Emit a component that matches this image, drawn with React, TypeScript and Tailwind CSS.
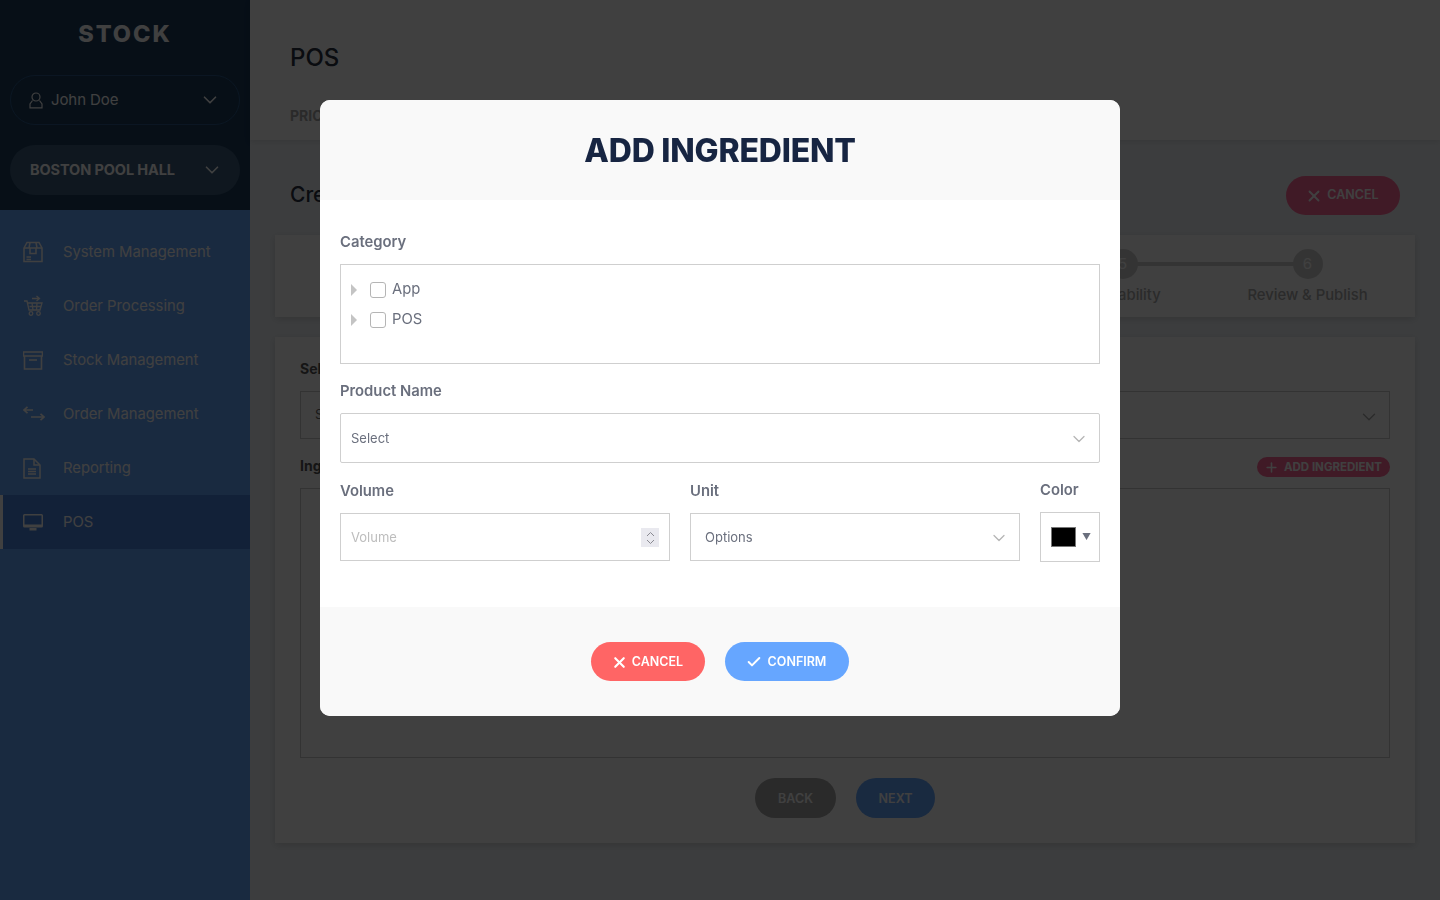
import React from "react";
import { Check, ChevronDown, Plus, X } from "lucide-react";

const font = { fontFamily: "Inter, 'Liberation Sans', sans-serif" };

function BoxIcon() {
  return (
    <svg width="20" height="22" viewBox="0 0 20 22" fill="none" stroke="currentColor" strokeWidth="1.5">
      <path d="M1 7 L4 1.5 H16 L19 7 V20.5 H1 Z" />
      <path d="M1 7 H19 M7 7 V12.5 H13 V7 M7 1.5 L6 7 M13 1.5 L14 7" />
      <path d="M3.5 16 H8 M3.5 18.5 H8" />
    </svg>
  );
}
function CartIcon() {
  return (
    <svg width="22" height="22" viewBox="0 0 22 22" fill="none" stroke="currentColor" strokeWidth="1.3">
      <path d="M1 6 H4 L6 15 H17 L19 8 H5" />
      <path d="M6.5 11.5 H18 M9 8 L10 15 M14 8 L13.5 15" />
      <circle cx="8" cy="18.5" r="1.8" />
      <circle cx="15.5" cy="18.5" r="1.8" />
      <path d="M9 3.5 H16 M13.5 1 L16.5 3.5 L13.5 6" />
    </svg>
  );
}
function ArchiveIcon() {
  return (
    <svg width="20" height="19" viewBox="0 0 20 19" fill="none" stroke="currentColor" strokeWidth="1.6">
      <path d="M0.5 1 H19.5 V5 H0.5 Z" />
      <path d="M1.5 5 V18 H18.5 V5" />
      <path d="M6 9 H14" />
    </svg>
  );
}
function SwapIcon() {
  return (
    <svg width="22" height="16" viewBox="0 0 22 16" fill="none" stroke="currentColor" strokeWidth="1.6">
      <path d="M1 4 H10 M4.5 0.8 L1 4 L4.5 7.2" />
      <path d="M8 11 H21 M17.5 7.8 L21 11 L17.5 14.2" />
    </svg>
  );
}
function FileIcon() {
  return (
    <svg width="18" height="21" viewBox="0 0 18 21" fill="none" stroke="currentColor" strokeWidth="1.5">
      <path d="M1 1 H11 L17 7 V20 H1 Z" />
      <path d="M11 1 V7 H17" />
      <path d="M5 11 H13 M5 13.5 H13 M5 16 H13" />
    </svg>
  );
}
function MonitorIcon() {
  return (
    <svg width="20" height="17" viewBox="0 0 20 17" fill="currentColor">
      <path d="M1.5 0 H18.5 A1.5 1.5 0 0 1 20 1.5 V12 A1.5 1.5 0 0 1 18.5 13.5 H1.5 A1.5 1.5 0 0 1 0 12 V1.5 A1.5 1.5 0 0 1 1.5 0 Z M1.5 1.5 V10.5 H18.5 V1.5 Z" fillRule="evenodd" />
      <path d="M6.5 14 H13.5 V16.5 H6.5 Z" />
    </svg>
  );
}
function UserIcon() {
  return (
    <svg width="14" height="17" viewBox="0 0 14 17" fill="none" stroke="currentColor" strokeWidth="1.2">
      <circle cx="7" cy="5" r="4" />
      <path d="M3.5 8.5 L1 12 V15.8 H13 V12 L10.5 8.5" />
    </svg>
  );
}

const menu = [
  { label: "System Management", icon: <BoxIcon /> },
  { label: "Order Processing", icon: <CartIcon /> },
  { label: "Stock Management", icon: <ArchiveIcon /> },
  { label: "Order Management", icon: <SwapIcon /> },
  { label: "Reporting", icon: <FileIcon /> },
  { label: "POS", icon: <MonitorIcon />, active: true },
];

const steps = [
  { n: 1, label: "" },
  { n: 2, label: "" },
  { n: 3, label: "" },
  { n: 4, label: "" },
  { n: 5, label: "Availability" },
  { n: 6, label: "Review & Publish" },
];

function Sidebar() {
  return (
    <aside className="w-[250px] shrink-0 h-full bg-[#66a6ff] flex flex-col">
      <div className="h-[210px] bg-[#1c3c5c] flex flex-col items-center px-[10px] text-white">
        <div className="h-[75px] pb-[8px] flex items-center text-[23.5px] font-extrabold tracking-[2px] text-white">STOCK</div>
        <div className="w-full h-[50px] rounded-full border border-[#2c5a8c] flex items-center pl-[18px] pr-[18px]">
          <UserIcon />
          <span className="ml-[8px] text-[15px] tracking-[-0.1px]">John Doe</span>
          <ChevronDown className="ml-auto" size={22} strokeWidth={1.8} />
        </div>
        <div className="w-full h-[50px] mt-[20px] rounded-full bg-[#3c5c7c] flex items-center pl-[20px] pr-[17px]">
          <span className="text-[14.5px] leading-[18px] font-bold tracking-[-0.1px]">BOSTON POOL HALL</span>
          <ChevronDown className="ml-auto" size={22} strokeWidth={1.8} />
        </div>
      </div>
      <nav className="pt-[15px] flex flex-col">
        {menu.map((m) => (
          <div
            key={m.label}
            className={`h-[54px] flex items-center text-white border-l-[3px] ${m.active ? "bg-[#4884e0] border-l-white" : "border-l-transparent"}`}
          >
            <span className="w-[60px] pl-[20px] shrink-0 flex justify-start">{m.icon}</span>
            <span className="text-[14.8px] font-normal">{m.label}</span>
          </div>
        ))}
      </nav>
    </aside>
  );
}

function Background() {
  return (
    <main className="flex-1 h-full bg-[#f0f4f8] flex flex-col min-w-0">
      <header className="h-[140px] shrink-0 bg-white shadow-[0_2px_6px_rgba(0,0,0,0.1)] pl-[40px] pt-[43px]">
        <h1 className="text-[24px] leading-[30px] font-medium text-[#283040]">POS</h1>
        <div className="mt-[34px] text-[14px] font-bold leading-[18px] text-[#a8a8a8]">PRICING</div>
      </header>
      <div className="flex-1 pl-[25px] pr-[25px] flex flex-col">
        <div className="h-[95px] flex items-center justify-between pl-[15px] pr-[15px] pt-[15px]">
          <h2 className="text-[21px] font-medium text-[#283040]">Create Product</h2>
          <button className="w-[114px] h-[39px] rounded-full bg-[#ff6898] text-white text-[12.5px] font-semibold flex items-center justify-center gap-[4px] pt-[1px] pr-[2px]">
            <X size={18} strokeWidth={2.5} />
            CANCEL
          </button>
        </div>
        <section className="h-[82px] bg-white shadow-[0_2px_8px_rgba(0,0,0,0.15)] px-[15px] pt-[14px] grid grid-cols-6">
          {steps.map((s, i) => (
            <div key={s.n} className="relative flex flex-col items-center text-[#aaaaaa]">
              {i < 5 && <div className="absolute left-1/2 w-full top-[13px] h-[4px] bg-[#d0d0d0]" />}
              <div className="relative w-[30px] h-[30px] rounded-full bg-[#d0d0d0] text-white text-[15px] flex items-center justify-center">{s.n}</div>
              {s.label && <div className="mt-[5px] text-[14.8px] font-medium whitespace-nowrap">{s.label}</div>}
            </div>
          ))}
        </section>
        <section className="h-[506px] mt-[20px] bg-white shadow-[0_2px_8px_rgba(0,0,0,0.15)] px-[25px] pt-[23px]">
          <div className="text-[14px] leading-[18px] font-bold text-[#555]">Select Type</div>
          <div className="mt-[13px] h-[48px] border border-[#ccc] flex items-center pl-[14px] pr-[9px] text-[13px] text-[#666]">
            Select
            <ChevronDown className="ml-auto mt-[3px] text-[#aaa]" size={22} strokeWidth={1.5} />
          </div>
          <div className="mt-[18px] h-[20px] flex items-start justify-between">
            <span className="text-[14px] leading-[18px] font-bold text-[#555]">Ingredients</span>
            <button className="w-[133px] h-[20px] rounded-full bg-[#ff6898] text-white text-[11.5px] font-bold flex items-center justify-center gap-[5px] pt-[2px] pr-[1px]">
              <Plus size={15} strokeWidth={2.5} className="-mt-[2px]" />
              ADD INGREDIENT
            </button>
          </div>
          <div className="mt-[11px] h-[270px] border border-[#ccc]" />
          <div className="mt-[20px] flex justify-center gap-[20px]">
            <button className="w-[81px] h-[40px] rounded-full bg-[#a8a8a8] text-white text-[12.5px] font-semibold pt-[2px]">BACK</button>
            <button className="w-[79px] h-[40px] rounded-full bg-[#66a6ff] text-white text-[12.5px] font-semibold pt-[2px]">NEXT</button>
          </div>
        </section>
      </div>
    </main>
  );
}

function Label({ children }: { children: React.ReactNode }) {
  return <div className="h-[18px] leading-[18px] text-[14.8px] font-semibold text-[#6a6f7d]">{children}</div>;
}

function TreeRow({ label }: { label: string }) {
  return (
    <div className="h-[30px] flex items-center">
      <span className="w-0 h-0 ml-[10px] mt-[2px] border-y-[6px] border-y-transparent border-l-[6px] border-l-[#c4c4c4]" />
      <span className="ml-[13px] mt-[2px] w-[16px] h-[16px] rounded-[3px] border border-[#b5b5b5] bg-white" />
      <span className="ml-[6px] text-[14.8px] text-[#6a6f7d]">{label}</span>
    </div>
  );
}

function Modal() {
  return (
    <div className="fixed inset-0 z-50 bg-black/75 flex justify-center pt-[100px]">
      <div className="w-[800px] h-[616px] rounded-[10px] overflow-hidden bg-white flex flex-col">
        <div className="h-[100px] shrink-0 bg-[#f9f9f9] flex items-center justify-center pt-[2px]">
          <h2 className="text-[32px] font-extrabold text-[#172542] tracking-[-0.2px]">ADD INGREDIENT</h2>
        </div>
        <div className="flex-1 px-[20px] pt-[33px]">
          <Label>Category</Label>
          <div className="mt-[13px] h-[100px] border border-[#cfcfcf] pt-[9px]">
            <TreeRow label="App" />
            <TreeRow label="POS" />
          </div>
          <div className="mt-[18px]">
            <Label>Product Name</Label>
          </div>
          <div className="mt-[13px] h-[50px] border border-[#cfcfcf] rounded-[2px] flex items-center pl-[10px] pr-[10px] pt-[1px] text-[13px] text-[#6a6f7d]">
            Select
            <ChevronDown className="ml-auto text-[#b5b5b5]" size={20} strokeWidth={1.5} />
          </div>
          <div className="mt-[18px] grid grid-cols-[330px_330px_60px] gap-x-[20px]">
            <div className="pt-[1px]">
              <Label>Volume</Label>
              <div className="mt-[13px] h-[48px] border border-[#cfcfcf] flex items-center pl-[10px] pr-[10px] pt-[1px] text-[13px] text-[#bdbdbd]">
                Volume
                <span className="ml-auto w-[18px] h-[19px] bg-[#e9e9ef] text-[#8a8a92] flex flex-col items-center justify-center">
                  <svg width="9" height="14" viewBox="0 0 9 14" fill="none" stroke="currentColor" strokeWidth="1">
                    <path d="M1 5 L4.5 1.5 L8 5 M1 9 L4.5 12.5 L8 9" />
                  </svg>
                </span>
              </div>
            </div>
            <div className="pt-[1px]">
              <Label>Unit</Label>
              <div className="mt-[13px] h-[48px] border border-[#cfcfcf] flex items-center pl-[14px] pr-[10px] pt-[1px] text-[13px] text-[#6a6f7d]">
                Options
                <ChevronDown className="ml-auto text-[#b5b5b5]" size={20} strokeWidth={1.5} />
              </div>
            </div>
            <div>
              <Label>Color</Label>
              <div className="mt-[13px] h-[50px] border border-[#cfcfcf] flex items-center pl-[10px]">
                <span className="w-[25px] h-[20px] bg-black border border-[#777]" />
                <span className="ml-[6px] text-[9px] text-[#6a6f7d]">▼</span>
              </div>
            </div>
          </div>
        </div>
        <div className="h-[109px] shrink-0 bg-[#f9f9f9] flex justify-center gap-[20px] pt-[35px]">
          <button className="w-[114px] h-[39px] rounded-full bg-[#ff6565] text-white text-[12.5px] font-semibold flex items-center justify-center gap-[4px] pt-[2px] pr-[2px]">
            <X size={17} strokeWidth={3} className="-mt-[1px]" />
            CANCEL
          </button>
          <button className="w-[124px] h-[39px] rounded-full bg-[#66a6ff] text-white text-[12.5px] font-semibold flex items-center justify-center gap-[6px] pt-[2px] pr-[2px]">
            <Check size={16} strokeWidth={3} className="-mt-[1px]" />
            CONFIRM
          </button>
        </div>
      </div>
    </div>
  );
}

export default function App() {
  return (
    <div className="w-[1440px] h-[900px] overflow-hidden flex" style={font}>
      <Sidebar />
      <Background />
      <Modal />
    </div>
  );
}
